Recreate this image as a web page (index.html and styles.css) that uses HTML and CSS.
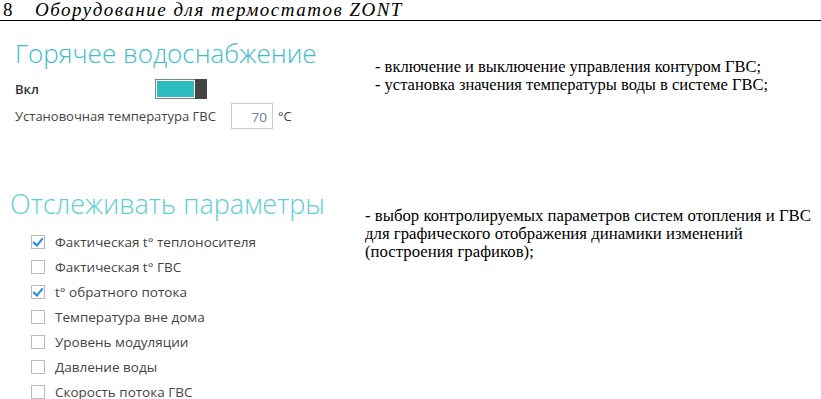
FILE: index.html
```html
<!DOCTYPE html>
<html lang="ru">
<head>
  <meta charset="UTF-8">
  <title>Оборудование для термостатов ZONT</title>
  <link rel="stylesheet" href="styles.css">
</head>
<body>
  <div class="page-header">
    <span class="page-num">8</span>
    <span class="page-title">Оборудование для термостатов ZONT</span>
  </div>

  <!-- ГВС -->
  <div class="section hot-water">
    <div class="screen">
      <h2 class="screen-title">Горячее водоснабжение</h2>
      <div class="field-row">
        <span class="field-label bold">Вкл</span>
        <div class="toggle">
          <div class="toggle-track"></div>
          <div class="toggle-thumb"></div>
        </div>
      </div>
      <div class="field-row">
        <span class="field-label">Установочная температура ГВС</span>
        <div class="temp-input">70</div>
        <span class="unit">°C</span>
      </div>
    </div>
    <div class="note indented">
      <p>- включение и выключение управления контуром ГВС;</p>
      <p>- установка значения температуры воды в системе ГВС;</p>
    </div>
  </div>

  <!-- Отслеживание -->
  <div class="section tracking">
    <div class="screen">
      <h2 class="screen-title light">Отслеживать параметры</h2>
      <ul class="check-list">
        <li><span class="check on"></span>Фактическая t° теплоносителя</li>
        <li><span class="check"></span>Фактическая t° ГВС</li>
        <li><span class="check on"></span>t° обратного потока</li>
        <li><span class="check"></span>Температура вне дома</li>
        <li><span class="check"></span>Уровень модуляции</li>
        <li><span class="check"></span>Давление воды</li>
        <li><span class="check"></span>Скорость потока ГВС</li>
      </ul>
    </div>
    <div class="note">
      <p>- выбор контролируемых параметров систем отопления и ГВС для графического отображения динамики изменений (построения графиков);</p>
    </div>
  </div>
</body>
</html>
```

FILE: styles.css
```css
:root {
  --teal: #3dbdc9;
  --teal-light: #5ccdd6;
  --toggle-on: #2bbcbf;
  --ui-text: #444;
}

* {
  box-sizing: border-box;
  margin: 0;
  padding: 0;
}

body {
  background: white;
  color: black;
  font-family: "Liberation Serif", serif;
  overflow: hidden;
}

.page-header {
  display: flex;
  align-items: flex-end;
  height: 21px;
  padding: 0 0 0 3px;
  border-bottom: 1px solid black;
  font-size: 19px;
  line-height: 20px;
}

.page-num {
  width: 32px;
}

.page-title {
  font-style: italic;
  letter-spacing: 1.5px;
}

.section {
  display: flex;
}

.screen {
  width: 360px;
  font-family: "Open Sans", sans-serif;
  color: var(--ui-text);
}

.screen-title {
  font-weight: 300;
  font-size: 26px;
  color: var(--teal);
  line-height: 36px;
}

.hot-water {
  padding: 14px 0 0 15px;
}

.field-row {
  display: flex;
  align-items: center;
  font-size: 13px;
}

.field-row + .field-row {
  margin-top: 4px;
}

.hot-water .field-row:first-of-type {
  margin-top: 8px;
}

.field-label {
  width: 140px;
}

.field-row .field-label:not(.bold) {
  width: auto;
  margin-right: 15px;
}

.bold {
  font-weight: 600;
  color: #333;
}

.toggle {
  display: flex;
  height: 20px;
}

.toggle-track {
  width: 40px;
  border: 1px solid #808080;
  border-right: none;
  background: var(--toggle-on);
  box-shadow: inset 0 0 0 1px white;
}

.toggle-thumb {
  width: 12px;
  background: #444;
}

.temp-input {
  width: 42px;
  height: 26px;
  border: 1px solid #ccc;
  text-align: right;
  padding: 4px 5px 0 0;
  color: #6680a0;
  font-size: 13.5px;
}

.unit {
  margin-left: 5px;
}

.note {
  font-size: 16.5px;
  line-height: 18px;
}

.note.indented {
  padding-top: 23px;
}

.tracking {
  padding: 57px 0 0 10px;
}

.tracking .screen {
  width: 355px;
}

.screen-title.light {
  color: var(--teal-light);
  font-size: 27px;
}

.tracking .note {
  width: 452px;
  padding-top: 21px;
  font-size: 16.75px;
  line-height: 18px;
}

.check-list {
  list-style: none;
  padding: 7px 0 0 21px;
  font-size: 13.5px;
}

.check-list li {
  display: flex;
  align-items: center;
  height: 25px;
}

.check {
  width: 14px;
  height: 14px;
  border: 1px solid #bbb;
  margin-right: 10px;
  position: relative;
}

.check.on::after {
  content: "";
  position: absolute;
  left: 3px;
  top: 0;
  width: 4px;
  height: 8px;
  border: solid #1e8ee0;
  border-width: 0 2px 2px 0;
  transform: rotate(40deg);
}
```
